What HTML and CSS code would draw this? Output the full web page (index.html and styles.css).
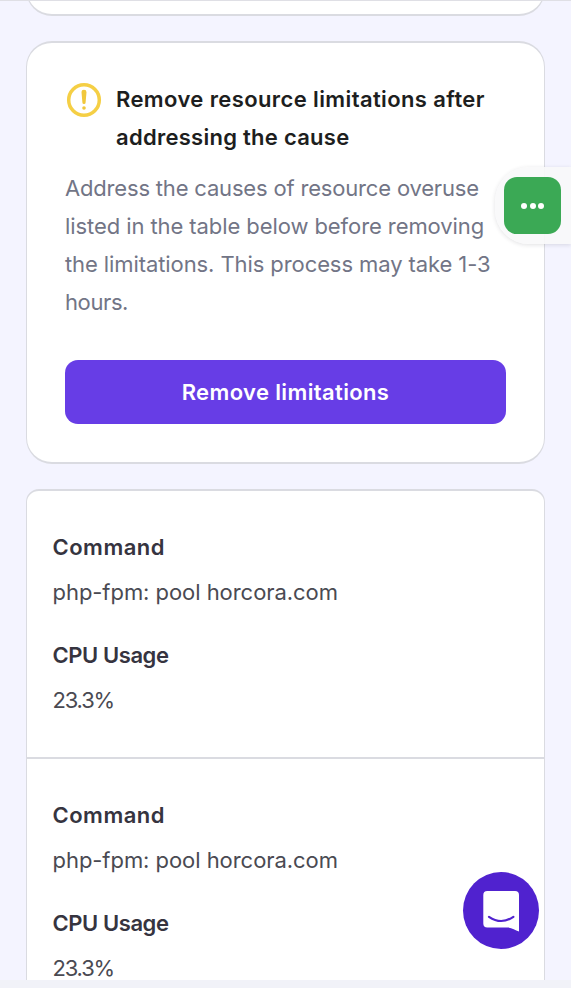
FILE: index.html
```html
<!DOCTYPE html>
<html lang="en">
<head>
<meta charset="utf-8">
<title>Resource usage</title>
<link rel="stylesheet" href="styles.css">
</head>
<body>
<main class="page">
  <section class="card previous-card"></section>
  <section class="card notice">
    <div class="notice-head">
      <svg class="warning" viewBox="0 0 36 36" aria-hidden="true">
        <circle cx="18" cy="18" r="15.3" fill="none" stroke="#f5cf45" stroke-width="3.5"/>
        <path d="M15.5 10.3a2.5 2.5 0 0 1 5 0l-.9 10.2a1.6 1.6 0 0 1-3.2 0z" fill="#f1c83c"/>
        <circle cx="18" cy="26" r="1.8" fill="#f1c83c"/>
      </svg>
      <h1 class="title"><span class="t1">Remove resource limitations after</span><br><span class="t2">addressing the cause</span></h1>
    </div>
    <p class="description"><span class="d1">Address the causes of resource overuse</span><br><span class="d2">listed in the table below before removing</span><br><span class="d3">the limitations. This process may take 1-3</span><br><span class="d4">hours.</span></p>
    <button class="remove">Remove limitations</button>
  </section>
  <section class="card table">
    <dl class="entry">
      <dt class="command">Command</dt>
      <dd class="pool">php-fpm: pool horcora.com</dd>
      <dt class="cpu">CPU Usage</dt>
      <dd class="percent">23.3%</dd>
    </dl>
    <dl class="entry">
      <dt class="command">Command</dt>
      <dd class="pool">php-fpm: pool horcora.com</dd>
      <dt class="cpu">CPU Usage</dt>
      <dd class="percent">23.3%</dd>
    </dl>
  </section>
</main>
<footer class="bottom-strip"></footer>
<aside class="side-tab"><button class="more" aria-label="More"><i></i><i></i><i></i></button></aside>
<button class="chat" aria-label="Chat">
  <svg viewBox="0 0 76 76" aria-hidden="true">
    <path d="M24.3 18H52a4 4 0 0 1 4 4v36.5c-4-1-7-4-12-4H24.3a4 4 0 0 1-4-4V22a4 4 0 0 1 4-4z" fill="#fff"/>
    <path d="M26 43.8q12.2 8.4 24.4 0" fill="none" stroke="#5022cf" stroke-width="2.2" stroke-linecap="round"/>
  </svg>
</button>
</body>
</html>
```
FILE: styles.css
```css
* { box-sizing: border-box; }
body {
  margin: 0;
  height: 988px;
  overflow: hidden;
  display: flex;
  flex-direction: column;
  background: #f4f4ff;
  font-family: Inter, "Liberation Sans", sans-serif;
  font-size: 22px;
}
button { border: 0; padding: 0; font: inherit; }
.page {
  display: flex;
  flex-direction: column;
  gap: 25px;
  height: 980px;
  flex: none;
  overflow: hidden;
  padding: 0 26px;
  border-top: 1px solid #dfdfe5;
}
.card {
  flex: none;
  background: #fff;
  border: solid #dadbe1;
  border-width: 2px 1px;
}
.previous-card {
  height: 65px;
  margin-top: -50px;
  border-radius: 26px;
}
.notice {
  height: 423px;
  padding: 37px 38px 0;
  border-radius: 26px;
}
.notice-head { display: flex; gap: 14px; padding-left: 1px; }
.warning { width: 36px; height: 36px; margin-top: 2px; flex: none; }
.title {
  margin: 0;
  color: #1d1e20;
  font-size: 22px;
  font-weight: 600;
  line-height: 38px;
  white-space: nowrap;
}
.t1 { letter-spacing: .39px; }
.t2 { letter-spacing: .27px; }
.description {
  margin: 13px 0 0;
  color: #727586;
  line-height: 38px;
  white-space: nowrap;
}
.d1 { letter-spacing: -.18px; }
.d2 { letter-spacing: -.08px; }
.d3 { letter-spacing: -.09px; }
.d4 { letter-spacing: -.4px; }
.remove {
  display: block;
  width: 100%;
  height: 64px;
  margin-top: 39px;
  padding-bottom: 1px;
  border-radius: 13px;
  background: #673de6;
  color: #fff;
  font-weight: 600;
  letter-spacing: .37px;
}
.table { border-radius: 13px 13px 0 0; }
.entry {
  height: 268px;
  margin: 0;
  padding: 37px 25.5px 0;
  border-bottom: 2px solid #dadbe1;
  line-height: 38px;
  color: #4a4a52;
}
.entry dt { font-weight: 600; color: #36343f; }
.entry dd { margin: 7px 0 0; }
.entry dd + dt { margin-top: 25px; }
.entry .command { letter-spacing: .5px; }
.entry .pool { letter-spacing: -.05px; }
.entry .cpu { letter-spacing: -.42px; }
.entry .percent { letter-spacing: -1.2px; }
.bottom-strip { height: 8px; background: #f1f2f8; }
.side-tab {
  position: absolute;
  top: 167px;
  right: 0;
  width: 76px;
  height: 77px;
  padding: 10px 9px;
  border-radius: 34px 0 0 34px;
  background: rgba(248, 248, 250, .9);
  box-shadow: 0 1px 4px rgba(40, 40, 60, .14);
}
.more {
  display: flex;
  align-items: center;
  justify-content: center;
  gap: 2.5px;
  width: 57px;
  height: 57px;
  border-radius: 13px;
  background: #3ba955;
}
.more i { width: 6px; height: 6px; border-radius: 50%; background: #fff; }
.chat {
  position: absolute;
  left: 463px;
  top: 872px;
  width: 76px;
  height: 77px;
  border-radius: 50%;
  background: #5022cf;
}
.chat svg { display: block; width: 76px; height: 76px; }
```
